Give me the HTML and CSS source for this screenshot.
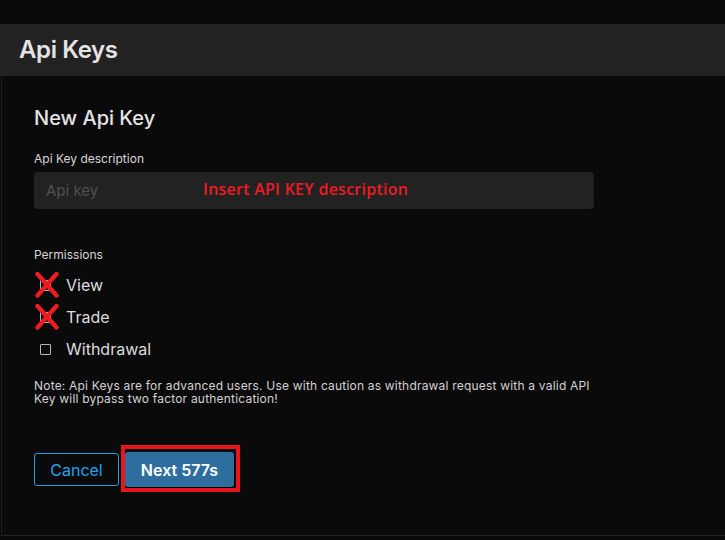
FILE: index.html
```html
<!DOCTYPE html>
<html lang="en">
<head>
<meta charset="utf-8">
<title>Api Keys</title>
<link rel="stylesheet" href="styles.css">
</head>
<body>
<div class="topbar"></div>
<header class="header">Api Keys</header>
<main class="panel">
  <h2 class="title">New Api Key</h2>
  <div class="field-label">Api Key description</div>
  <div class="input">
    <span class="placeholder">Api key</span>
    <span class="annotation">Insert API KEY description</span>
  </div>
  <div class="perm-label">Permissions</div>
  <ul class="perms">
    <li class="perm">
      <span class="box"></span><span class="perm-text">View</span>
      <svg class="cross" viewBox="0 0 26 28" width="26" height="28"><path d="M3.5 3 L22.5 24.5 M22.5 3 L3.5 24.5" stroke="#ec1c24" stroke-width="4.4" stroke-linecap="round" fill="none"/></svg>
    </li>
    <li class="perm">
      <span class="box"></span><span class="perm-text">Trade</span>
      <svg class="cross" viewBox="0 0 26 28" width="26" height="28"><path d="M3.5 3 L22.5 24.5 M22.5 3 L3.5 24.5" stroke="#ec1c24" stroke-width="4.4" stroke-linecap="round" fill="none"/></svg>
    </li>
    <li class="perm">
      <span class="box"></span><span class="perm-text">Withdrawal</span>
    </li>
  </ul>
  <p class="note">Note: Api Keys are for advanced users. Use with caution as withdrawal request with a valid API Key will bypass two factor authentication!</p>
  <div class="actions">
    <button class="btn-cancel">Cancel</button>
    <span class="highlight"><button class="btn-next">Next 577s</button></span>
  </div>
</main>
</body>
</html>
```

FILE: styles.css
```css
html, body {
  margin: 0;
  padding: 0;
  background: #0a0a0a;
}
body {
  font-family: Inter, "Noto Sans", sans-serif;
  color: #e2e2e2;
  width: 725px;
  height: 540px;
  overflow: hidden;
}
.topbar {
  height: 24px;
}
.header {
  height: 52px;
  line-height: 52px;
  background: #222222;
  padding-left: 19px;
  font-size: 24px;
  font-weight: 600;
  color: #e4e4e4;
  letter-spacing: -0.4px;
}
.panel {
  margin-left: 1px;
  border-left: 1px solid #1e1e1e;
  border-bottom: 1px solid #222;
  height: 429px;
  padding: 30px 32px 0 32px;
  display: flex;
  flex-direction: column;
  align-items: flex-start;
}
.title {
  margin: 0;
  font-size: 20px;
  line-height: 24px;
  font-weight: 500;
  color: #e4e4e4;
}
.field-label {
  margin-top: 22px;
  font-size: 12px;
  line-height: 14px;
  color: #d6d6d6;
}
.input {
  position: relative;
  margin-top: 6px;
  width: 548px;
  height: 37px;
  padding-left: 12px;
  background: #222222;
  border-radius: 4px;
  display: flex;
  align-items: center;
}
.placeholder {
  font-size: 15px;
  color: #505050;
}
.annotation {
  position: absolute;
  left: 169px;
  top: 6px;
  font-family: "Open Sans", sans-serif;
  font-weight: 600;
  font-size: 16px;
  letter-spacing: 0.25px;
  color: #ec1c24;
}
.perm-label {
  margin-top: 39px;
  font-size: 12px;
  line-height: 14px;
  color: #d6d6d6;
}
.perms {
  list-style: none;
  margin: 7px 0 0 0;
  padding: 0;
}
.perm {
  position: relative;
  height: 32px;
  display: flex;
  align-items: center;
  padding-left: 6px;
}
.box {
  width: 9px;
  height: 9px;
  border: 1.5px solid #b8b8b8;
  border-radius: 1px;
  margin-right: 15px;
}
.perm-text {
  font-size: 16px;
  color: #dcdcdc;
}
.cross {
  position: absolute;
  left: 0;
  top: 2px;
}
.note {
  margin: 14px 0 0 0;
  width: 565px;
  font-size: 12px;
  line-height: 13px;
  letter-spacing: 0.2px;
  color: #d2d2d2;
}
.actions {
  margin-top: 40px;
  display: flex;
  align-items: center;
  gap: 2px;
}
.btn-cancel {
  width: 85px;
  height: 33px;
  margin-top: 2px;
  background: transparent;
  border: 1px solid #1b9fdf;
  border-radius: 3px;
  color: #1ea6ea;
  font-family: Inter, sans-serif;
  font-size: 16px;
  padding: 0;
}
.highlight {
  display: inline-flex;
  border: 4px solid #e8141e;
  padding: 3px 2px 1px 0;
}
.btn-next {
  width: 109px;
  height: 35px;
  background: #2e6e9f;
  border: none;
  border-radius: 3px;
  box-shadow: 1px 1px 0 #000;
  color: #ffffff;
  font-family: Inter, sans-serif;
  font-weight: 600;
  font-size: 16px;
  padding: 0;
}
```
